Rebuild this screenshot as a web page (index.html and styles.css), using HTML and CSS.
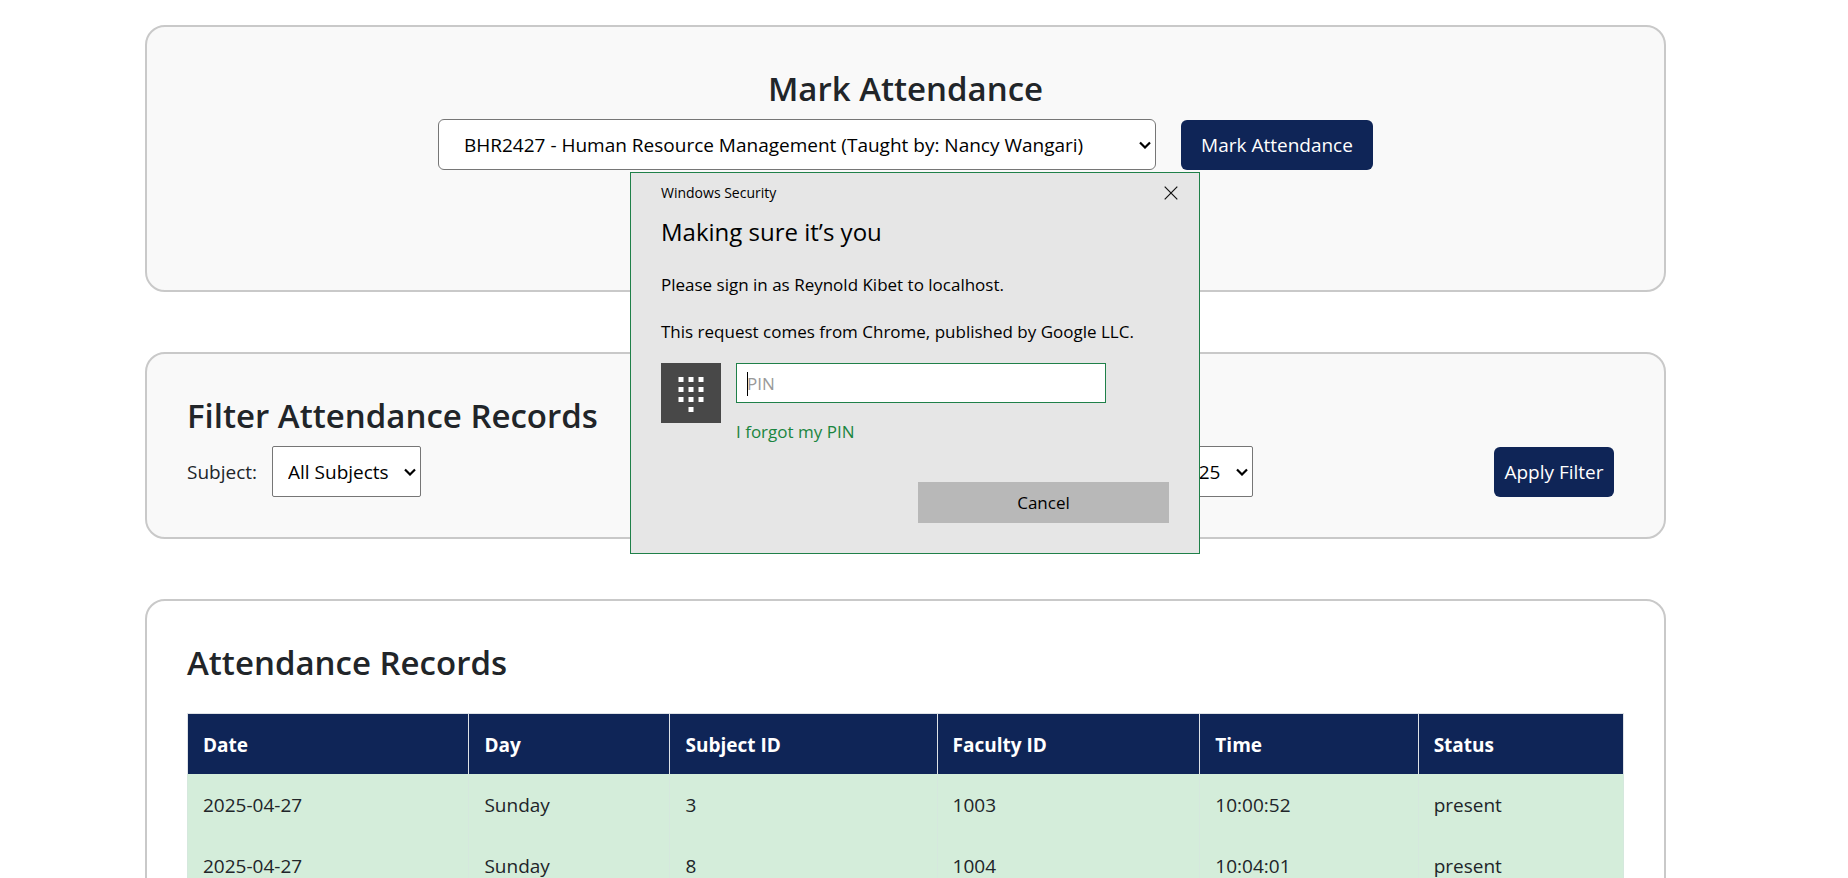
FILE: index.html
```
<!DOCTYPE html>
<html lang="en">
<head>
<meta charset="utf-8">
<title>Mark Attendance</title>
<link rel="stylesheet" href="styles.css">
</head>
<body>
<main class="page">
  <section class="card card-mark">
    <h2 class="title">Mark Attendance</h2>
    <form class="mark-form">
      <select class="select select-class" aria-label="Class">
        <option>BHR2427 - Human Resource Management (Taught by: Nancy Wangari)</option>
      </select>
      <button class="btn btn-mark" type="button">Mark Attendance</button>
    </form>
  </section>

  <section class="card">
    <h2 class="title">Filter Attendance Records</h2>
    <form class="filter-form">
      <div class="field">
        <label for="subject">Subject:</label>
        <select class="select select-subject" id="subject"><option>All Subjects</option></select>
      </div>
      <div class="field field-year">
        <select class="select select-year" aria-label="Year"><option>2025</option></select>
      </div>
      <button class="btn btn-filter" type="button">Apply Filter</button>
    </form>
  </section>

  <section class="card card-records">
    <h2 class="title title-records">Attendance Records</h2>
    <table class="records">
      <colgroup>
        <col class="col-date"><col class="col-day"><col class="col-subject"><col class="col-faculty"><col class="col-time"><col class="col-status">
      </colgroup>
      <thead>
        <tr><th>Date</th><th>Day</th><th>Subject ID</th><th>Faculty ID</th><th>Time</th><th>Status</th></tr>
      </thead>
      <tbody>
        <tr><td>2025-04-27</td><td>Sunday</td><td>3</td><td>1003</td><td>10:00:52</td><td>present</td></tr>
        <tr><td>2025-04-27</td><td>Sunday</td><td>8</td><td>1004</td><td>10:04:01</td><td>present</td></tr>
      </tbody>
    </table>
  </section>
</main>

<div class="dialog" role="dialog" aria-labelledby="dialog-title">
  <div class="dialog-bar">
    <span>Windows Security</span>
    <button class="close" type="button" aria-label="Close">
      <svg width="14" height="14" viewBox="0 0 14 14" fill="none" stroke="#111" stroke-width="1.2"><path d="M.7.7l12.6 12.6M13.3.7L.7 13.3"/></svg>
    </button>
  </div>
  <h1 class="dialog-title" id="dialog-title">Making sure it’s you</h1>
  <p class="dialog-text">Please sign in as Reynold Kibet to localhost.</p>
  <p class="dialog-text">This request comes from Chrome, published by Google LLC.</p>
  <div class="credential">
    <div class="keypad">
      <svg width="60" height="60" viewBox="0 0 60 60" fill="#fff"><path d="M17.500 14h5v5h-5zM27.500 14h5v5h-5zM37.500 14h5v5h-5zM17.500 24h5v5h-5zM27.500 24h5v5h-5zM37.500 24h5v5h-5zM17.500 34h5v5h-5zM27.500 34h5v5h-5zM37.500 34h5v5h-5zM27.500 44h5v5h-5z"/></svg>
    </div>
    <div class="pin">
      <div class="pin-box">
        <input class="pin-input" type="password" placeholder="PIN" aria-label="PIN">
        <span class="caret"></span>
      </div>
      <a class="forgot" href="#">I forgot my PIN</a>
    </div>
  </div>
  <button class="cancel" type="button">Cancel</button>
</div>
</body>
</html>
```
FILE: styles.css
```
* { box-sizing: border-box; }
html { overflow: hidden; }
body {
  margin: 0;
  background: #fff;
  color: #212529;
  font: 19px/30px "Segoe UI", "Open Sans", "Noto Sans", sans-serif;
}
button, input, select { font: inherit; }

.page {
  display: flex;
  flex-direction: column;
  gap: 60px;
  padding: 25px 182px 60px 145px;
}
.card {
  padding: 40px;
  border: 2px solid #c9c9c9;
  border-radius: 20px;
  background: #f9f9f9;
}
.card-mark { min-height: 267px; text-align: center; }
.card-records { background: #fff; }
.title {
  margin: 0 0 8px;
  font-size: 33px;
  line-height: 44px;
  font-weight: 600;
}
.title-records { margin-bottom: 28px; }

.select {
  height: 51px;
  border: 1px solid #767676;
  background: #fff url("data:image/svg+xml,%3Csvg xmlns='http://www.w3.org/2000/svg' width='12' height='8' fill='none' stroke='%23000' stroke-width='2.2'%3E%3Cpath d='M1 1.500l5 5 5-5'/%3E%3C/svg%3E") no-repeat right 4px center;
  color: #000;
  appearance: none;
}
.select-class { width: 718px; padding: 0 25px; border-radius: 6px; }
.select-subject { width: 149px; padding-left: 15px; border-radius: 2px; }
.select-year { width: 92px; padding-left: 15px; border-radius: 2px; }
.btn {
  height: 50px;
  padding: 0 10px;
  border: 0;
  border-radius: 6px;
  background: #0f2557;
  color: #fff;
  white-space: nowrap;
}
.btn-mark { width: 192px; }
.btn-filter { width: 120px; margin-right: 10px; padding: 0; }
.mark-form { display: flex; justify-content: center; align-items: flex-end; gap: 25px; }
.filter-form { display: flex; justify-content: space-between; align-items: flex-end; }
.field { display: flex; align-items: center; gap: 15px; }
.field-year { justify-content: flex-end; width: 591px; }

.records { width: 100%; table-layout: fixed; border-collapse: collapse; }
.records th, .records td { padding: 16px 15px 15px; border: 1px solid #d5e8dd; text-align: left; }
.records th { background: #0f2557; border-color: #dee2e6; border-bottom: 0; padding-bottom: 14px; color: #fff; font-weight: 700; }
.records td { background: #d4edda; border-width: 0 1px; }
.col-date { width: 19.6%; }
.col-day { width: 14%; }
.col-subject { width: 18.6%; }
.col-faculty { width: 18.3%; }
.col-time { width: 15.2%; }
.col-status { width: 14.3%; }

.dialog {
  position: absolute;
  top: 172px;
  left: 630px;
  width: 570px;
  padding: 0 30px 30px;
  border: 1px solid #1f8049;
  background: #e6e6e6;
  color: #000;
  font-size: 17px;
  line-height: 24px;
}
.dialog-bar { display: flex; justify-content: space-between; align-items: center; height: 40px; font-size: 14px; }
.close { display: flex; padding: 6px; margin-right: -15px; border: 0; background: none; }
.dialog-title { margin: 0 0 22px; font-size: 24px; line-height: 38px; font-weight: 400; }
.dialog-text { margin: 0 0 23px; white-space: nowrap; }
.dialog-text + .dialog-text { margin-bottom: 19px; }
.credential { display: flex; gap: 15px; }
.keypad { width: 60px; height: 60px; background: #484848; }
.pin-box { position: relative; width: 370px; height: 40px; }
.pin-input { display: block; width: 100%; height: 100%; padding: 0 10px; border: 1px solid #1f8049; background: #fff; outline: 0; }
.pin-input::placeholder { color: #999; opacity: 1; }
.caret { position: absolute; top: 9px; left: 11px; width: 1px; height: 24px; background: #000; }
.forgot { display: block; margin-top: 17px; color: #1a8540; text-decoration: none; }
.cancel { display: block; width: 251px; height: 41px; margin: 38px 0 0 auto; border: 0; background: #b8b8b8; color: #000; }
```
